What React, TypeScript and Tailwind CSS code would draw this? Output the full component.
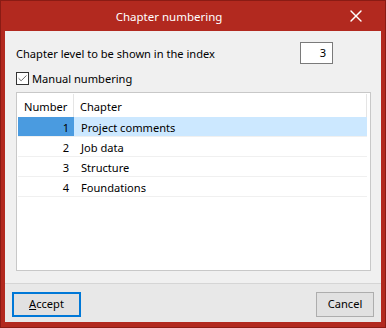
import { Check, X } from 'lucide-react';

const rows = [
  { n: 1, name: 'Project comments' },
  { n: 2, name: 'Job data' },
  { n: 3, name: 'Structure' },
  { n: 4, name: 'Foundations' },
];

export default function App() {
  return (
    <div
      className="w-[386px] h-[328px] flex flex-col bg-[#b2291f] border border-[#8a1b14] text-[11.1px] text-black"
      style={{ fontFamily: '"Segoe UI", "Noto Sans", sans-serif' }}
    >
      {/* title bar */}
      <div className="h-[30px] flex items-center shrink-0">
        <div className="flex-1 text-center text-white pl-[4px] pt-[1px] text-[11.5px]">Chapter numbering</div>
        <div className="w-[46px] h-full flex items-center justify-center mr-[6px] text-white">
          <X size={20} strokeWidth={1.7} />
        </div>
      </div>

      {/* body */}
      <div className="flex-1 mx-[4px] mb-[5px] bg-[#f0f0f0] flex flex-col">
        <div className="flex-1 flex flex-col px-[11px] pt-[11px]">
          <div className="flex items-center h-[22px]">
            <span className="flex-1 pt-[3px]">Chapter level to be shown in the index</span>
            <div className="w-[33px] h-[22px] bg-white border border-[#7a7a7a] flex items-center justify-end pr-[6px] mr-[37px]">
              3
            </div>
          </div>
          <div className="flex items-center h-[14px] mt-[7px] gap-[3px]">
            <div className="w-[13px] h-[13px] border border-[#333] bg-white flex items-center justify-center">
              <Check size={11} strokeWidth={1.6} className="text-[#333]" />
            </div>
            <span className="pt-[3px]">Manual numbering</span>
          </div>
          <div className="mt-[7px] h-[179px] bg-white border border-[#c8c8c8] p-[1px] w-[355px]">
            <div className="flex h-[23px] items-center">
              <div className="w-[56px] h-full flex items-center pl-[6px] pt-[4px] border-r border-[#e5e5e5]">Number</div>
              <div className="w-[293px] h-full flex items-center pl-[6px] pt-[4px] border-r border-[#e5e5e5]">Chapter</div>
            </div>
            {rows.map((r, i) => (
              <div key={r.n} className="flex h-[20px] border-b border-[#f0f0f0] w-[349px]">
                <div className={`w-[56px] h-full flex items-center justify-end pr-[5px] pt-[3px] ${i === 0 ? 'bg-[#4a9be0]' : ''}`}>{r.n}</div>
                <div className={`flex-1 h-full flex items-center pl-[7px] pt-[3px] ${i === 0 ? 'bg-[#cce8ff]' : ''}`}>{r.name}</div>
              </div>
            ))}
          </div>
        </div>

        {/* footer */}
        <div className="h-[39px] shrink-0 border-t border-[#d5d5d5] bg-[#e8e8e8] flex items-center justify-between px-[7px] pt-[2px]">
          <button className="w-[69px] h-[25px] bg-[#e1e1e1] border-2 border-[#0078d7] flex items-center justify-center pt-[1px]">
            <span><span className="underline">A</span>ccept</span>
          </button>
          <button className="w-[58px] h-[25px] bg-[#e1e1e1] border border-[#adadad] flex items-center justify-center pt-[1px]">
            Cancel
          </button>
        </div>
      </div>
    </div>
  );
}
